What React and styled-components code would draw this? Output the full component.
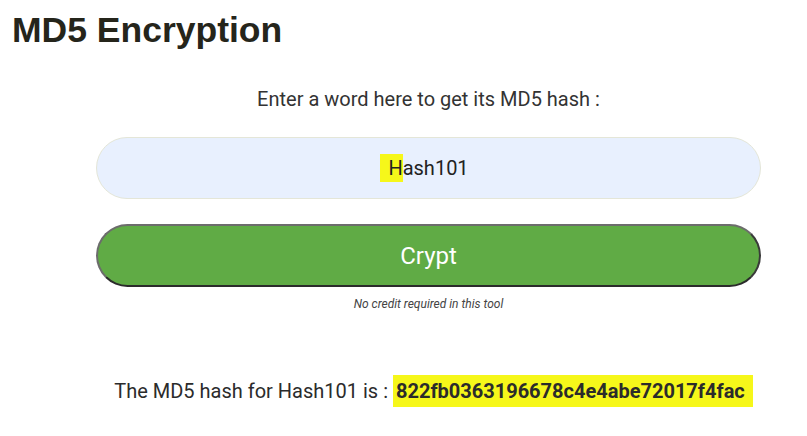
import { useState } from "react";
import styled, { createGlobalStyle } from "styled-components";

const Global = createGlobalStyle`
  body {
    margin: 0;
    background: #ffffff;
    font-family: Roboto, "Liberation Sans", sans-serif;
    color: #2b2b2b;
  }
`;

const Page = styled.div`
  width: 807px;
  height: 436px;
  overflow: hidden;
`;

const Title = styled.h1`
  margin: 0;
  padding: 10px 0 0 12px;
  font-family: "Liberation Sans", Arial, sans-serif;
  font-weight: 700;
  font-size: 35.5px;
  line-height: 40px;
  color: #25251b;
`;

const Tool = styled.main`
  width: 665px;
  margin: 0 0 0 96px;
  display: flex;
  flex-direction: column;
  align-items: stretch;
`;

const Label = styled.p`
  margin: 37px 0 0;
  text-align: center;
  font-size: 20px;
  line-height: 24px;
  color: #333333;
`;

const Field = styled.div`
  margin-top: 26px;
  height: 60px;
  border: 1px solid #e4e6d8;
  border-radius: 31px;
  background: #e8f0fe;
  display: flex;
  align-items: center;
  justify-content: center;
  font-size: 20px;
  color: #222222;
`;

const Mark = styled.span`
  background: #f6f71a;
  font-weight: ${(p) => (p.bold ? 700 : "inherit")};
  padding: ${(p) => p.pad || "0"};
  margin-left: ${(p) => p.shift || "0"};
`;

const Button = styled.button`
  margin-top: 25px;
  height: 63px;
  border: 2px solid #6c6c6c;
  border-bottom-color: #2b2b2b;
  border-right-color: #3a3a3a;
  border-radius: 32px;
  background: #60ab45;
  color: #ffffff;
  font-family: Roboto, "Liberation Sans", sans-serif;
  font-size: 24px;
  cursor: pointer;
`;

const Note = styled.p`
  margin: 10px 0 0;
  text-align: center;
  font-size: 12px;
  line-height: 14px;
  font-style: italic;
  color: #444444;
`;

const Result = styled.p`
  margin: 65px 0 0;
  text-align: center;
  font-size: 20px;
  line-height: 30px;
  color: #2b2b2b;
  padding-left: 10px;
`;

export default function App() {
  const [word] = useState("Hash101");
  const hash = "822fb0363196678c4e4abe72017f4fac";

  return (
    <Page>
      <Global />
      <Title>MD5 Encryption</Title>
      <Tool>
        <Label>Enter a word here to get its MD5 hash :</Label>
        <Field>
          <Mark pad="2px 0 2px 8px" shift="-8px">{word[0]}</Mark>
          {word.slice(1)}
        </Field>
        <Button>Crypt</Button>
        <Note>No credit required in this tool</Note>
        <Result>
          The MD5 hash for {word} is : <Mark bold pad="4px 8px 4px 3px">{hash}</Mark>
        </Result>
      </Tool>
    </Page>
  );
}
